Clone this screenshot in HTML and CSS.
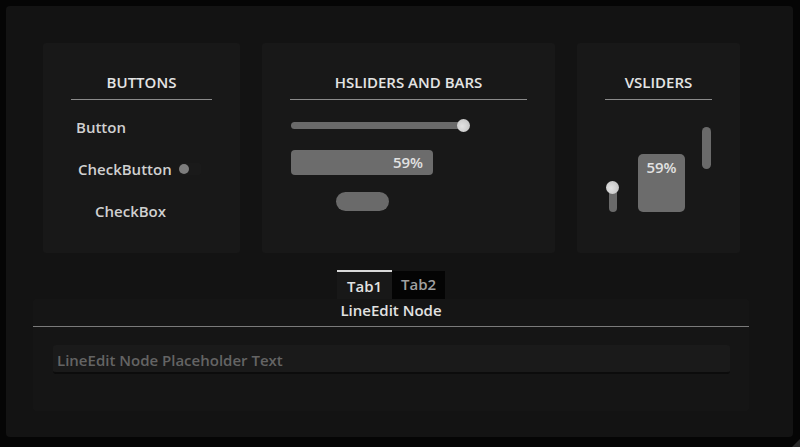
FILE: index.html
```html
<!DOCTYPE html>
<html>
<head>
<meta charset="utf-8">
<link rel="stylesheet" href="styles.css">
</head>
<body>
<div class="window">
  <div class="cards">
    <section class="card card-buttons">
      <h2 class="card-title">BUTTONS</h2>
      <div class="btn-list">
        <div class="row row-button">Button</div>
        <div class="row row-check">CheckButton<span class="toggle"><span class="knob"></span></span></div>
        <div class="row row-box">CheckBox</div>
      </div>
    </section>
    <section class="card card-h">
      <h2 class="card-title">HSLIDERS AND BARS</h2>
      <div class="h-list">
        <div class="hslider"><div class="htrack"></div><div class="grab hgrab"></div></div>
        <div class="hbar">59%</div>
        <div class="pill"></div>
      </div>
    </section>
    <section class="card card-v">
      <h2 class="card-title">VSLIDERS</h2>
      <div class="v-list">
        <div class="vslider"><div class="vtrack"></div><div class="grab vgrab"></div></div>
        <div class="vbar">59%</div>
        <div class="vthin"></div>
      </div>
    </section>
  </div>
  <div class="tabs">
    <div class="tab tab-active">Tab1</div>
    <div class="tab tab-idle">Tab2</div>
  </div>
  <div class="edit-panel">
    <div class="edit-head">LineEdit Node</div>
    <div class="line-edit">LineEdit Node Placeholder Text</div>
  </div>
  <div class="resize"></div>
</div>
</body>
</html>
```
FILE: styles.css
```css
* { box-sizing: border-box; }
html, body { margin: 0; padding: 0; }
body {
  background: #050505;
  width: 800px;
  height: 447px;
  overflow: hidden;
  font-family: "Open Sans", "Noto Sans", sans-serif;
  font-size: 15px;
  font-weight: 600;
  line-height: 20px;
  color: #d6d6d6;
}
.window {
  position: relative;
  margin: 6px;
  width: 787px;
  height: 431px;
  background: #131313;
  border-radius: 4px;
  padding: 37px 0 0 27px;
}
.cards {
  display: flex;
  gap: 22px;
  margin-left: 10px;
}
.card {
  height: 210px;
  background: #181818;
  border-radius: 3px;
  padding-top: 29px;
}
.card-buttons { width: 197px; }
.card-h { width: 293px; }
.card-v { width: 163px; }
.card-title {
  margin: 0 28px;
  font-size: 15px;
  font-weight: 600;
  line-height: 20px;
  text-align: center;
  color: #e4e4e4;
  padding-bottom: 7px;
  border-bottom: 1px solid #8a8a8a;
}
.btn-list {
  margin: 6px 0 0 28px;
  display: flex;
  flex-direction: column;
}
.row {
  height: 42px;
  display: flex;
  align-items: center;
  color: #d0d0d0;
}
.row-button { padding-left: 5px; }
.row-check { padding-left: 7px; }
.row-box { padding-left: 24px; }
.toggle {
  display: inline-flex;
  align-items: center;
  margin-left: 7px;
  width: 22px;
  height: 12px;
  background: #1a1a1a;
  border-radius: 2px;
}
.knob {
  width: 10px;
  height: 10px;
  border-radius: 50%;
  background: #7d7d7d;
}
.h-list {
  margin: 19px 0 0 29px;
  display: flex;
  flex-direction: column;
  align-items: flex-start;
}
.hslider {
  position: relative;
  width: 179px;
  height: 13px;
  display: flex;
  align-items: center;
}
.htrack {
  width: 176px;
  height: 7px;
  border-radius: 4px;
  background: #6a6a6a;
}
.grab {
  position: absolute;
  width: 13px;
  height: 13px;
  border-radius: 50%;
  background: radial-gradient(circle at 40% 55%, #e2e2e2 0%, #d2d2d2 45%, #b8b8b8 100%);
}
.hgrab { left: 166px; top: 0; }
.hbar {
  margin-top: 18px;
  width: 142px;
  height: 25px;
  border-radius: 4px;
  background: #6c6c6c;
  text-align: right;
  padding: 2px 10px 0 0;
  color: #e2e2e2;
}
.pill {
  margin: 17px 0 0 45px;
  width: 53px;
  height: 19px;
  border-radius: 10px;
  background: #6a6a6a;
}
.v-list {
  margin: 27px 0 0 29px;
  height: 85px;
  display: flex;
  align-items: flex-end;
}
.vslider {
  position: relative;
  width: 14px;
  height: 31px;
  display: flex;
  justify-content: center;
  align-items: flex-end;
}
.vtrack {
  width: 8px;
  height: 25px;
  border-radius: 4px;
  background: #6a6a6a;
}
.vgrab { left: 0; top: 0; }
.vbar {
  margin-left: 18px;
  width: 47px;
  height: 58px;
  border-radius: 5px;
  background: #6c6c6c;
  text-align: center;
  padding-top: 3px;
  color: #e2e2e2;
}
.vthin {
  align-self: flex-start;
  margin-left: 17px;
  width: 9px;
  height: 42px;
  border-radius: 5px;
  background: #6a6a6a;
}
.tabs {
  margin-top: 17px;
  display: flex;
  justify-content: center;
  width: 716px;
}
.tab {
  height: 29px;
  padding: 4px 0 0;
  text-align: center;
}
.tab-active {
  width: 55px;
  background: #181818;
  border-top: 2px solid #d8d8d8;
  color: #e2e2e2;
}
.tab-idle {
  width: 53px;
  margin-top: 1px;
  height: 28px;
  padding-top: 3px;
  background: #040404;
  color: #a0a0a0;
}
.edit-panel {
  width: 716px;
  height: 112px;
  background: #151515;
  border-radius: 2px;
}
.edit-head {
  height: 28px;
  padding-top: 1px;
  text-align: center;
  color: #e2e2e2;
  border-bottom: 1px solid #7a7a7a;
}
.line-edit {
  margin: 18px 19px 0 20px;
  height: 29px;
  background: #1a1a1a;
  border-radius: 3px;
  border-bottom: 2px solid #0c0c0c;
  padding: 5px 0 0 4px;
  color: #646464;
}
.resize {
  position: absolute;
  right: -7px;
  bottom: -10px;
  width: 0;
  height: 0;
  border-left: 8px solid transparent;
  border-bottom: 8px solid #2a2a2a;
}
```
